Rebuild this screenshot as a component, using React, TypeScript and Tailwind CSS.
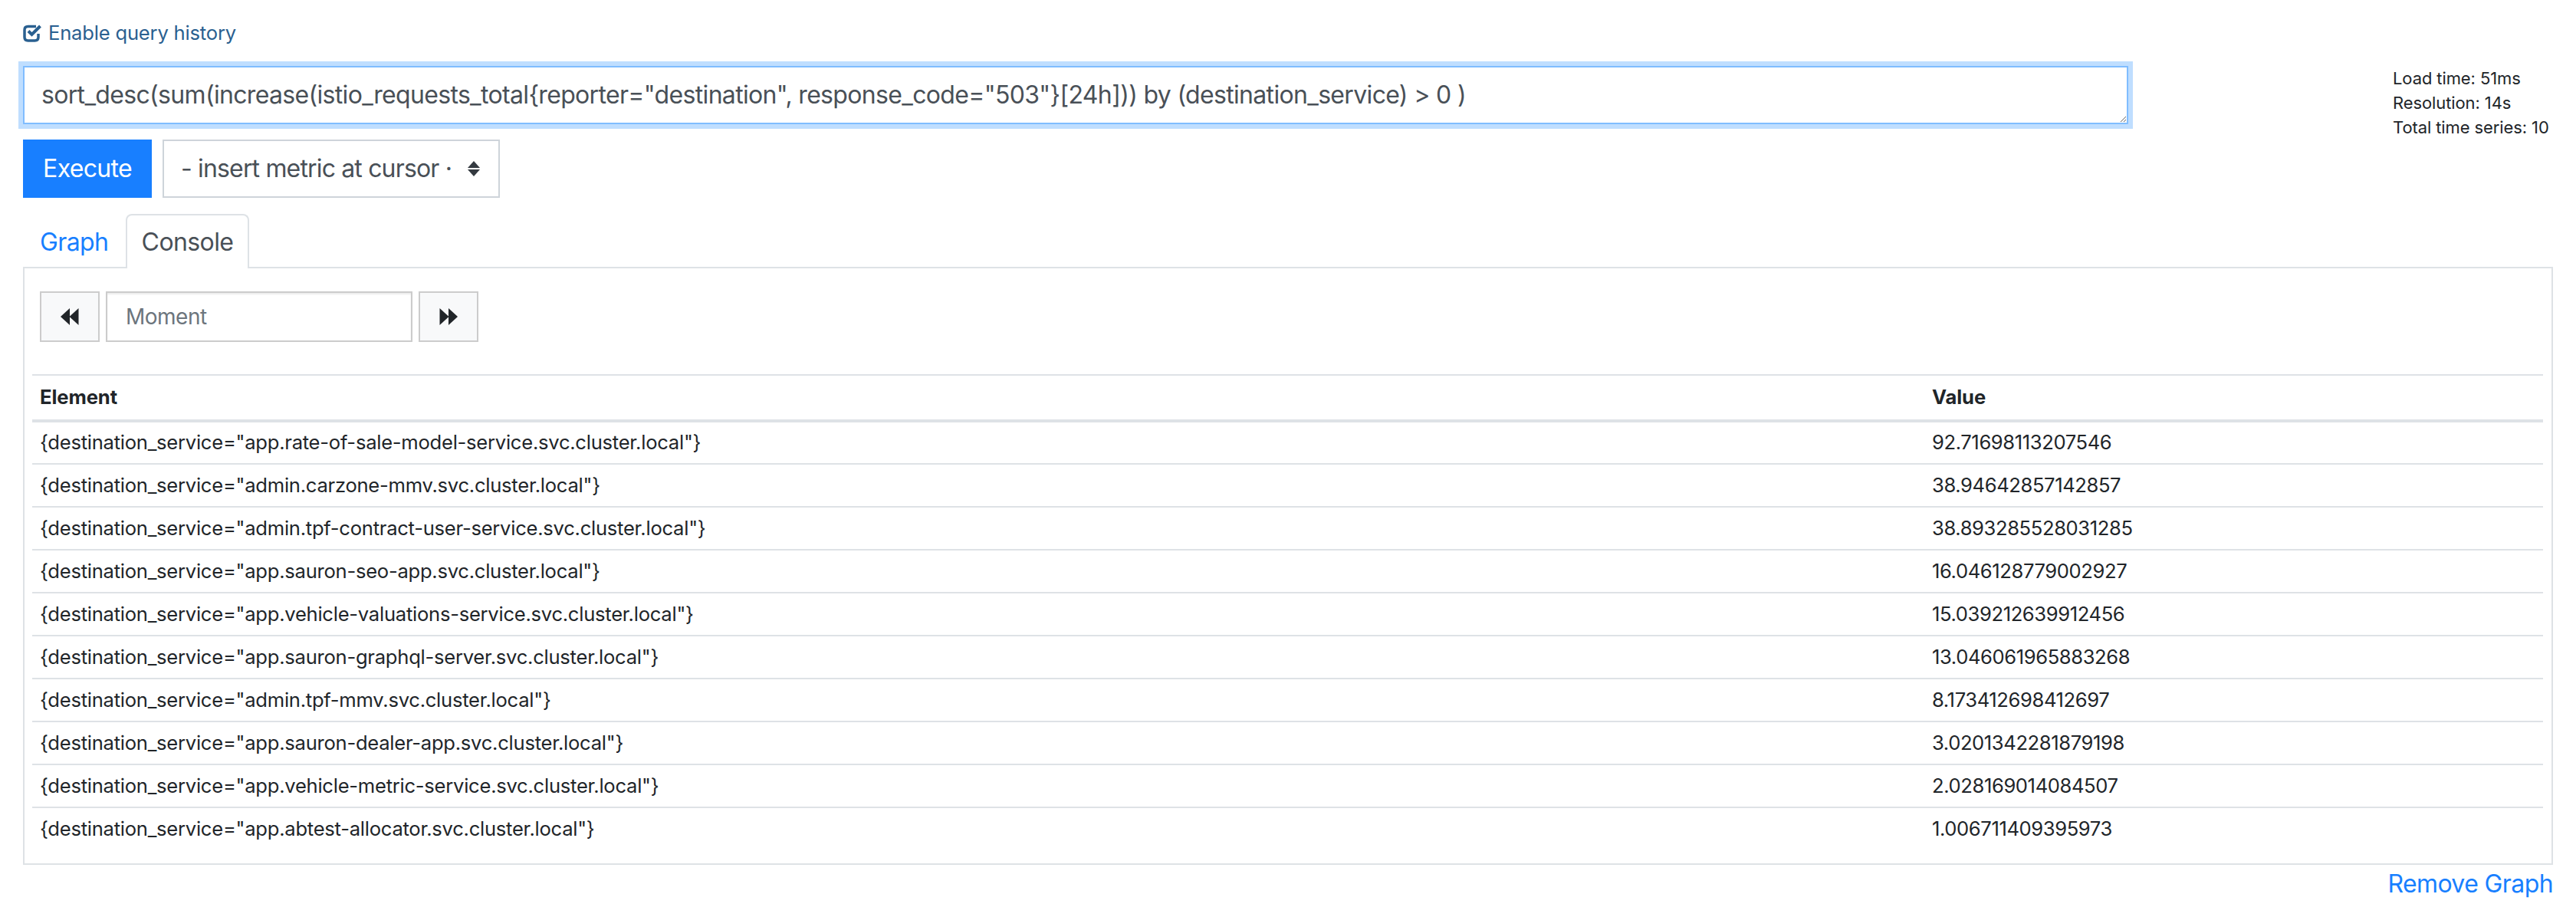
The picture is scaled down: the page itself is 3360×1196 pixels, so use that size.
const rows = [
  ['{destination_service="app.rate-of-sale-model-service.svc.cluster.local"}', "92.71698113207546"],
  ['{destination_service="admin.carzone-mmv.svc.cluster.local"}', "38.94642857142857"],
  ['{destination_service="admin.tpf-contract-user-service.svc.cluster.local"}', "38.893285528031285"],
  ['{destination_service="app.sauron-seo-app.svc.cluster.local"}', "16.046128779002927"],
  ['{destination_service="app.vehicle-valuations-service.svc.cluster.local"}', "15.039212639912456"],
  ['{destination_service="app.sauron-graphql-server.svc.cluster.local"}', "13.046061965883268"],
  ['{destination_service="admin.tpf-mmv.svc.cluster.local"}', "8.173412698412697"],
  ['{destination_service="app.sauron-dealer-app.svc.cluster.local"}', "3.0201342281879198"],
  ['{destination_service="app.vehicle-metric-service.svc.cluster.local"}', "2.028169014084507"],
  ['{destination_service="app.abtest-allocator.svc.cluster.local"}', "1.006711409395973"],
];

const query =
  'sort_desc(sum(increase(istio_requests_total{reporter="destination", response_code="503"}[24h])) by (destination_service) > 0 )';

function CheckIcon() {
  return (
    <svg width="25" height="24" viewBox="0 0 25 24" className="shrink-0 fill-none stroke-[#2a6090]">
      <path d="M17 3.5H6.5Q2 3.5 2 8V17.5Q2 22 6.5 22H15.5Q20 22 20 17.5V13" strokeWidth="3.5" />
      <path d="M7 9.5 11.5 14 22.5 3" strokeWidth="4" />
    </svg>
  );
}

function SkipIcon({ flip }: { flip?: boolean }) {
  return (
    <svg width="24" height="22" viewBox="0 0 24 22" className={flip ? "-scale-x-100 fill-[#212529]" : "fill-[#212529]"}>
      <path d="M12 0V22L0 11Z" />
      <path d="M23.5 0V22L11.5 11Z" />
    </svg>
  );
}

export default function App() {
  return (
    <div className="h-[1196px] bg-white px-[30px] font-['Inter',sans-serif] text-[#212529]">
      <div className="flex h-[86px] items-start pt-[28px]">
        <label className="flex h-[30px] items-center gap-[8px] text-[25.6px] tracking-[-0.2px] text-[#2a6090]">
          <CheckIcon />
          Enable query history
        </label>
      </div>

      <div className="flex items-start justify-between">
        <div>
          <textarea
            readOnly
            value={query}
            className="block h-[76px] w-[2746px] rounded-none border-2 border-[#80bdff] bg-white px-[22px] py-[12px] text-[32px] leading-[48px] tracking-[-0.67px] text-[#495057] shadow-[0_0_0_6px_#bfdeff] outline-none"
          />
          <div className="mt-[20px] flex gap-[14px]">
            <button className="h-[76px] w-[168px] bg-[#187fff] text-[32px] tracking-[-0.7px] text-white">Execute</button>
            <div className="flex h-[76px] w-[440px] items-center justify-between border-2 border-[#ced4da] pr-[24px] pl-[22px] text-[32px] tracking-[-0.84px] text-[#495057]">
              <span className="whitespace-nowrap">- insert metric at cursor ·</span>
              <svg width="16" height="20" viewBox="0 0 16 20" className="shrink-0 fill-[#343a40]">
                <path d="M8 0 16 9H0Z" />
                <path d="M8 20 16 11H0Z" />
              </svg>
            </div>
          </div>
        </div>
        <div className="w-[209px] text-[22px] leading-[32px] tracking-[-0.1px] whitespace-nowrap">
          <div>Load time: 51ms</div>
          <div>Resolution: 14s</div>
          <div>Total time series: 10</div>
        </div>
      </div>

      <div className="mt-[21px] flex h-[69px] items-start pl-[22px] text-[32px] tracking-[-0.6px]">
        <a className="mt-[13px] w-[112px] text-[#187fff]">Graph</a>
        <div className="relative z-10 flex h-[71px] w-[161px] items-center justify-center rounded-t-[8px] border-2 border-b-0 border-[#dee2e6] bg-white text-[#495057]">
          Console
        </div>
      </div>

      <div className="h-[780px] border-2 border-[#dee2e6] pt-[30px] pr-[11px] pl-[10px]">
        <div className="flex h-[66px] gap-[8px] pl-[10px]">
          <button className="flex w-[78px] items-center justify-center border-2 border-[#ccc] bg-[#f8f9fa]">
            <SkipIcon />
          </button>
          <div className="flex w-[400px] items-center border-2 border-[#ccc] px-[24px] text-[28px] tracking-[-0.5px] text-[#6c757d] shadow-[inset_0_2px_2px_rgba(0,0,0,0.08)]">
            Moment
          </div>
          <button className="flex w-[78px] items-center justify-center border-2 border-[#ccc] bg-[#f8f9fa]">
            <SkipIcon flip />
          </button>
        </div>

        <table className="mt-[42px] w-full table-fixed border-collapse text-[25.6px]">
          <thead>
            <tr className="h-[60px] border-t-2 border-b-4 border-[#dee2e6] text-left">
              <th className="px-[10px] font-bold tracking-[-0.1px]">Element</th>
              <th className="w-[807px] px-[10px] font-bold tracking-[-0.1px]">Value</th>
            </tr>
          </thead>
          <tbody>
            {rows.map(([element, value], i) => (
              <tr key={element} className={i < rows.length - 1 ? "h-[56px] border-b-2 border-[#dee2e6]" : "h-[56px]"}>
                <td className="px-[10px] tracking-[-0.26px]">{element}</td>
                <td className="px-[10px] tracking-[-0.4px]">{value}</td>
              </tr>
            ))}
          </tbody>
        </table>
      </div>

      <div className="mt-[1px] text-right text-[32px] leading-[48px] tracking-[-0.6px] text-[#187fff]">Remove Graph</div>
    </div>
  );
}
